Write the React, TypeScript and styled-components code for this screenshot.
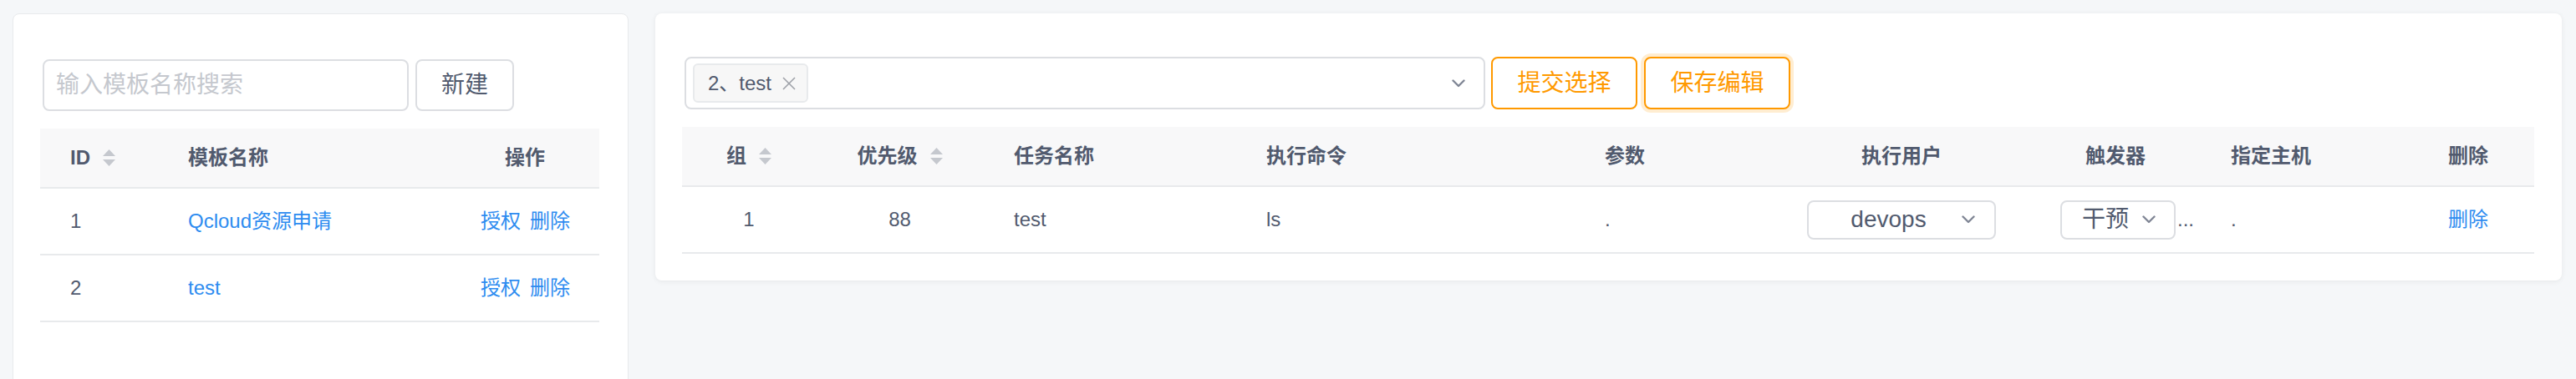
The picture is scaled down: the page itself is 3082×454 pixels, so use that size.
import React from 'react';
import styled, { createGlobalStyle } from 'styled-components';

const GlobalStyle = createGlobalStyle`
  html, body { margin: 0; padding: 0; background: #f5f7f9; }
  body {
    font-family: "Liberation Sans", "Noto Sans CJK SC", sans-serif;
    color: #515a6e;
    line-height: 1.3;
  }
  * { box-sizing: border-box; }
`;

const Page = styled.div`
  display: flex;
  align-items: flex-start;
  gap: 32px;
  padding: 16px 17px 0 15px;
  height: 454px;
  overflow: hidden;
`;

const LeftCard = styled.section`
  width: 737px;
  min-height: 480px;
  flex-shrink: 0;
  background: #fff;
  border: 1px solid #e8eaec;
  border-radius: 8px;
  padding: 54px 34px 0 32px;
`;

const RightCard = styled.section`
  flex: 1;
  background: #fff;
  border-radius: 8px;
  box-shadow: 0 1px 6px rgba(0, 0, 0, 0.07);
  padding: 52px 33px 32px 32px;
`;

const Toolbar = styled.div<{ $h: number; $indent: number }>`
  display: flex;
  align-items: center;
  height: ${p => p.$h}px;
  padding-left: ${p => p.$indent}px;
  margin-bottom: 21px;
`;

const SearchInput = styled.input`
  width: 438px;
  height: 62px;
  border: 2px solid #dcdee2;
  border-radius: 8px;
  padding: 0 14px;
  font-family: inherit;
  font-size: 28px;
  line-height: 36px;
  color: #515a6e;
  outline: none;
  &::placeholder { color: #c5c8ce; }
`;

const Button = styled.button<{ $w: number; $tone?: 'default' | 'warning'; $focus?: boolean; $gap: number }>`
  width: ${p => p.$w}px;
  height: 100%;
  margin-left: ${p => p.$gap}px;
  background: #fff;
  border: 2px solid ${p => (p.$tone === 'warning' ? '#ff9900' : '#dcdee2')};
  color: ${p => (p.$tone === 'warning' ? '#ff9900' : '#515a6e')};
  border-radius: 8px;
  font-family: inherit;
  font-size: 28px;
  line-height: 36px;
  padding: 0;
  cursor: pointer;
  box-shadow: ${p => (p.$focus ? '0 0 0 4px rgba(255, 153, 0, 0.18)' : 'none')};
`;

const MultiSelect = styled.div`
  width: 958px;
  height: 63px;
  border: 2px solid #dcdee2;
  border-radius: 8px;
  display: flex;
  align-items: center;
  padding: 0 22px 0 8px;
`;

const Tag = styled.span`
  display: inline-flex;
  align-items: center;
  height: 47px;
  padding: 0 13px 0 16px;
  background: #f7f7f7;
  border: 2px solid #e8eaec;
  border-radius: 6px;
  font-size: 24px;
  line-height: 32px;
  color: #515a6e;
  gap: 13px;
`;

const Spacer = styled.div`
  flex: 1;
`;

const Table = styled.table`
  width: 100%;
  table-layout: fixed;
  border-collapse: separate;
  border-spacing: 0;
  font-size: 24px;
  line-height: 32px;
`;

const Th = styled.th<{ $align?: 'left' | 'center' }>`
  box-sizing: content-box;
  height: 70px;
  padding: 0 36px;
  background: #f8f8f9;
  border-bottom: 2px solid #e8eaec;
  text-align: ${p => p.$align ?? 'left'};
  font-weight: 700;
  color: #515a6e;
  white-space: nowrap;
`;

const Td = styled.td<{ $align?: 'left' | 'center' }>`
  box-sizing: content-box;
  height: 78px;
  padding: 0 36px;
  border-bottom: 2px solid #e8eaec;
  text-align: ${p => p.$align ?? 'left'};
  color: #515a6e;
  white-space: nowrap;
`;

const Link = styled.a<{ $gap?: number }>`
  color: #2d8cf0;
  text-decoration: none;
  cursor: pointer;
  margin-right: ${p => p.$gap ?? 0}px;
`;

const SortIcon = styled.svg`
  width: 15px;
  height: 20px;
  margin-left: 15px;
  vertical-align: middle;
  position: relative;
  top: -2px;
`;

const CellSelect = styled.span<{ $w: number; $pl: number; $pr: number }>`
  display: inline-flex;
  align-items: center;
  vertical-align: middle;
  width: ${p => p.$w}px;
  height: 47px;
  border: 2px solid #dcdee2;
  border-radius: 8px;
  padding: 0 ${p => p.$pr}px 0 ${p => p.$pl}px;
  font-size: 28px;
  line-height: 36px;
  color: #515a6e;
  background: #fff;
`;

const CellSelectText = styled.span`
  flex: 1;
  text-align: center;
  margin-right: 8px;
`;

const Dots = styled.span`
  vertical-align: middle;
  margin-left: 2px;
`;

const Sort = () => (
  <SortIcon viewBox="0 0 15 20">
    <polygon points="0,8 7.5,0 15,8" fill="#c5c8ce" />
    <polygon points="0,12 7.5,20 15,12" fill="#c5c8ce" />
  </SortIcon>
);

const Chevron = ({ w = 16 }: { w?: number }) => (
  <svg width={w} height="10" viewBox="0 0 16 10" style={{ flexShrink: 0 }}>
    <polyline points="1.5,1.5 8,8 14.5,1.5" fill="none" stroke="#808695" strokeWidth="2.4" strokeLinecap="round" strokeLinejoin="round" />
  </svg>
);

const CloseX = () => (
  <svg width="16" height="16" viewBox="0 0 16 16">
    <line x1="1" y1="1" x2="15" y2="15" stroke="#9ea1a8" strokeWidth="1.6" />
    <line x1="15" y1="1" x2="1" y2="15" stroke="#9ea1a8" strokeWidth="1.6" />
  </svg>
);

const templates = [
  { id: 1, name: 'Qcloud资源申请' },
  { id: 2, name: 'test' },
];

export default function App() {
  return (
    <>
      <GlobalStyle />
      <Page>
        <LeftCard>
          <Toolbar $h={62} $indent={3}>
            <SearchInput placeholder="输入模板名称搜索" />
            <Button $w={118} $gap={8}>新建</Button>
          </Toolbar>
          <Table>
            <colgroup>
              <col style={{ width: 141 }} />
              <col style={{ width: 350 }} />
              <col style={{ width: 178 }} />
            </colgroup>
            <thead>
              <tr>
                <Th>ID<Sort /></Th>
                <Th>模板名称</Th>
                <Th $align="center">操作</Th>
              </tr>
            </thead>
            <tbody>
              {templates.map(t => (
                <tr key={t.id}>
                  <Td>{t.id}</Td>
                  <Td><Link>{t.name}</Link></Td>
                  <Td $align="center">
                    <Link $gap={11}>授权</Link>
                    <Link>删除</Link>
                  </Td>
                </tr>
              ))}
            </tbody>
          </Table>
        </LeftCard>

        <RightCard>
          <Toolbar $h={63} $indent={3}>
            <MultiSelect>
              <Tag>
                2、test
                <CloseX />
              </Tag>
              <Spacer />
              <Chevron />
            </MultiSelect>
            <Button $w={175} $gap={7} $tone="warning">提交选择</Button>
            <Button $w={175} $gap={8} $tone="warning" $focus>保存编辑</Button>
          </Toolbar>
          <Table>
            <colgroup>
              <col style={{ width: 160 }} />
              <col style={{ width: 201 }} />
              <col style={{ width: 302 }} />
              <col style={{ width: 405 }} />
              <col style={{ width: 237 }} />
              <col style={{ width: 308 }} />
              <col style={{ width: 204 }} />
              <col style={{ width: 260 }} />
              <col style={{ width: 139 }} />
            </colgroup>
            <thead>
              <tr>
                <Th $align="center">组<Sort /></Th>
                <Th $align="center">优先级<Sort /></Th>
                <Th>任务名称</Th>
                <Th>执行命令</Th>
                <Th>参数</Th>
                <Th $align="center">执行用户</Th>
                <Th $align="center">触发器</Th>
                <Th>指定主机</Th>
                <Th>删除</Th>
              </tr>
            </thead>
            <tbody>
              <tr>
                <Td $align="center">1</Td>
                <Td $align="center">88</Td>
                <Td>test</Td>
                <Td>ls</Td>
                <Td>.</Td>
                <Td $align="center">
                  <CellSelect $w={226} $pl={16} $pr={23}>
                    <CellSelectText>devops</CellSelectText>
                    <Chevron />
                  </CellSelect>
                </Td>
                <Td>
                  <CellSelect $w={138} $pl={16} $pr={22}>
                    <CellSelectText>干预</CellSelectText>
                    <Chevron />
                  </CellSelect>
                  <Dots>...</Dots>
                </Td>
                <Td>.</Td>
                <Td><Link>删除</Link></Td>
              </tr>
            </tbody>
          </Table>
        </RightCard>
      </Page>
    </>
  );
}
